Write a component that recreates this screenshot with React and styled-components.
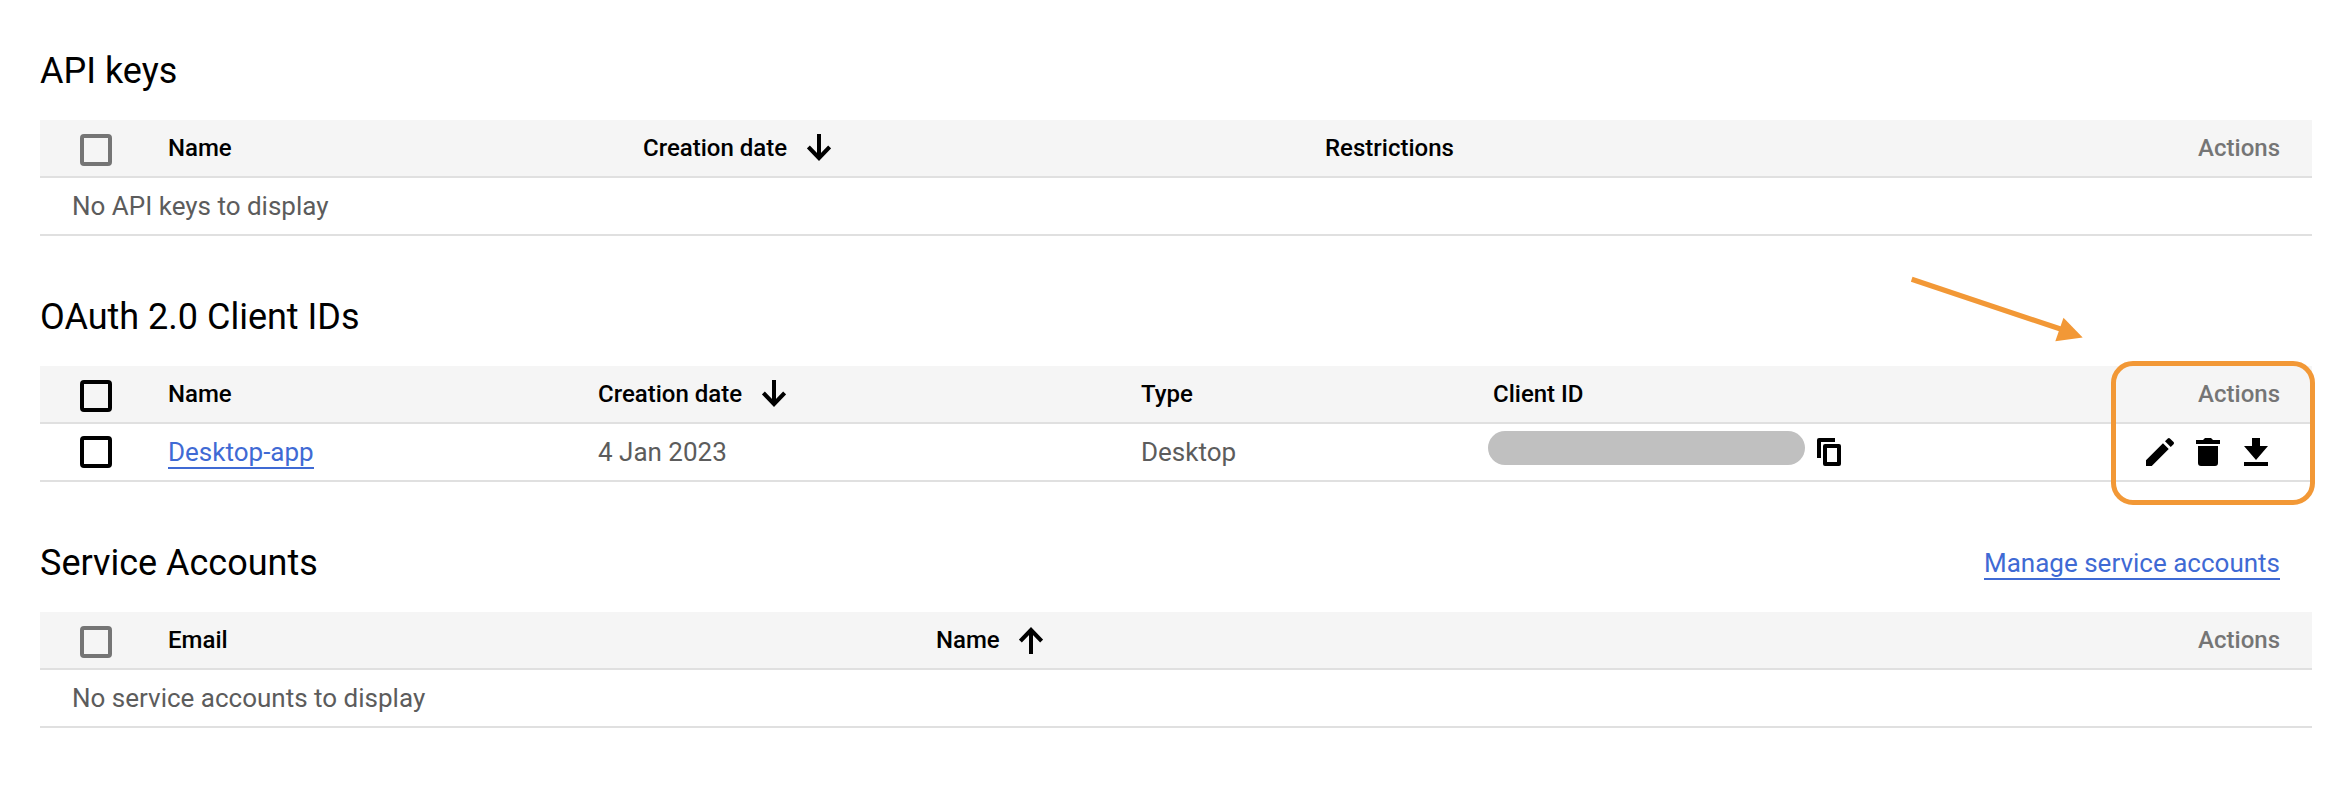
import React from 'react';
import styled, { createGlobalStyle } from 'styled-components';

const GlobalStyle = createGlobalStyle`
  * { box-sizing: border-box; }
  body {
    margin: 0;
    background: #fff;
    color: #000;
    font-family: Roboto, "Liberation Sans", sans-serif;
  }
`;

const Page = styled.main`
  position: relative;
  height: 788px;
  padding: 36px 40px 0;
  display: flex;
  flex-direction: column;
  gap: 46px;
  overflow: hidden;
`;

const Section = styled.section`
  display: flex;
  flex-direction: column;
`;

const SectionHead = styled.header`
  height: 84px;
  display: flex;
  justify-content: space-between;
  padding-right: 32px;
`;

const Title = styled.h2`
  margin: 0;
  font-size: 36px;
  font-weight: 400;
  line-height: 70px;
`;

const Link = styled.a`
  align-self: ${(p) => (p.$head ? 'flex-start' : 'center')};
  margin-top: ${(p) => (p.$head ? '19px' : '1px')};
  font-size: 26px;
  line-height: 32px;
  height: 33px;
  color: #3f6ad4;
  border-bottom: 2px solid #3f6ad4;
  text-decoration: none;
`;

const Row = styled.div`
  display: grid;
  grid-template-columns: 128px ${(p) => p.$columns} 1fr;
  height: 58px;
  border-bottom: 2px solid #e0e0e0;
  background: ${(p) => (p.$header ? '#f5f5f5' : 'transparent')};
  font-size: ${(p) => (p.$header ? '24px' : '26px')};
  font-weight: ${(p) => (p.$header ? 500 : 400)};
  color: ${(p) => (p.$header ? '#000' : '#5c5c5c')};
`;

const EmptyRow = styled.div`
  display: flex;
  align-items: center;
  height: 58px;
  padding-left: 32px;
  border-bottom: 2px solid #e0e0e0;
  font-size: 26px;
  color: #5c5c5c;
`;

const Cell = styled.div`
  display: flex;
  align-items: center;
  white-space: nowrap;
`;

const CheckCell = styled(Cell)`
  padding-left: 40px;
  padding-top: ${(p) => (p.$header ? '4px' : '0')};
`;

const ActionsCell = styled(Cell)`
  justify-content: flex-end;
  padding-right: ${(p) => (p.$icons ? '38px' : '32px')};
  gap: 12px;
  color: ${(p) => (p.$icons ? '#000' : '#757575')};
`;

const Checkbox = styled.span`
  width: 32px;
  height: 32px;
  border: 4px solid ${(p) => (p.$disabled ? '#757575' : '#000')};
  border-radius: 4px;
`;

const SortIcon = styled.svg`
  width: 24px;
  height: 27px;
  margin-left: ${(p) => (p.$up ? '19px' : '20px')};
  margin-bottom: ${(p) => (p.$up ? '-1px' : '1px')};
  transform: ${(p) => (p.$up ? 'rotate(180deg)' : 'none')};
`;

const Icon = styled.svg`
  width: 36px;
  height: 36px;
  fill: #000;
`;

const Redacted = styled.span`
  width: 317px;
  height: 34.5px;
  margin: 0 6px 8.5px -5px;
  border-radius: 18px;
  background: #c0c0c0;
`;

const Highlight = styled.div`
  position: absolute;
  left: 2111px;
  top: 361px;
  width: 204px;
  height: 144px;
  border: 5px solid #f29836;
  border-radius: 22px;
`;

const Pointer = styled.svg`
  position: absolute;
  left: 1900px;
  top: 270px;
  width: 190px;
  height: 80px;
`;

const Sort = ({ up }) => (
  <SortIcon $up={up} viewBox="0 0 24 27">
    <path d="M12 0V24M1.4 13L12 24L22.6 13" fill="none" stroke="#000" strokeWidth="4" />
  </SortIcon>
);

const EditIcon = () => (
  <Icon viewBox="0 0 18 18">
    <path d="M2 13.12l8.49-8.488 2.878 2.878L4.88 16H2v-2.88zm13.776-8.017L14.37 6.507 11.493 3.63l1.404-1.406a.764.764 0 0 1 1.081 0l1.798 1.798c.299.298.299.782 0 1.08z" />
  </Icon>
);

const DeleteIcon = () => (
  <Icon viewBox="0 0 36 36">
    <path d="M6 6h7l2-2h6l2 2h7v4H6zM8 12h20v17a3 3 0 0 1-3 3H11a3 3 0 0 1-3-3z" />
  </Icon>
);

const DownloadIcon = () => (
  <Icon viewBox="0 0 36 36">
    <path d="M14 4h8v8h8L18 26 6 12h8zM6 28h24v4H6z" />
  </Icon>
);

const CopyIcon = () => (
  <Icon viewBox="0 0 36 36">
    <path d="M24 4H8a2 2 0 0 0-2 2v18h4V8h14zM14 10a2 2 0 0 0-2 2v18a2 2 0 0 0 2 2h14a2 2 0 0 0 2-2V12a2 2 0 0 0-2-2zM16 14h10v14H16z" fillRule="evenodd" />
  </Icon>
);

const HeaderRow = ({ columns, labels, sorted, up, disabled }) => (
  <Row $header $columns={columns}>
    <CheckCell $header>
      <Checkbox $disabled={disabled} />
    </CheckCell>
    {labels.map((label) => (
      <Cell key={label}>
        {label}
        {label === sorted && <Sort up={up} />}
      </Cell>
    ))}
    <ActionsCell>Actions</ActionsCell>
  </Row>
);

const KEY_COLUMNS = '475px 682px 400px';
const CLIENT_COLUMNS = '430px 543px 352px 400px';
const ACCOUNT_COLUMNS = '768px 600px';

export default function App() {
  return (
    <>
      <GlobalStyle />
      <Page>
        <Section>
          <SectionHead>
            <Title>API keys</Title>
          </SectionHead>
          <HeaderRow columns={KEY_COLUMNS} labels={['Name', 'Creation date', 'Restrictions']} sorted="Creation date" disabled />
          <EmptyRow>No API keys to display</EmptyRow>
        </Section>

        <Section>
          <SectionHead>
            <Title>OAuth 2.0 Client IDs</Title>
          </SectionHead>
          <HeaderRow columns={CLIENT_COLUMNS} labels={['Name', 'Creation date', 'Type', 'Client ID']} sorted="Creation date" />
          <Row $columns={CLIENT_COLUMNS}>
            <CheckCell>
              <Checkbox />
            </CheckCell>
            <Cell>
              <Link>Desktop-app</Link>
            </Cell>
            <Cell>4 Jan 2023</Cell>
            <Cell>Desktop</Cell>
            <Cell>
              <Redacted />
              <CopyIcon />
            </Cell>
            <ActionsCell $icons>
              <EditIcon />
              <DeleteIcon />
              <DownloadIcon />
            </ActionsCell>
          </Row>
        </Section>

        <Section>
          <SectionHead>
            <Title>Service Accounts</Title>
            <Link $head>Manage service accounts</Link>
          </SectionHead>
          <HeaderRow columns={ACCOUNT_COLUMNS} labels={['Email', 'Name']} sorted="Name" up disabled />
          <EmptyRow>No service accounts to display</EmptyRow>
        </Section>

        <Highlight />
        <Pointer viewBox="1900 270 190 80">
          <path d="M1911.7 279.3L2062 329.5" stroke="#f29836" strokeWidth="5.2" />
          <path d="M2063.5 317.7L2082.7 337.5L2055.3 341.3Z" fill="#f29836" />
        </Pointer>
      </Page>
    </>
  );
}
